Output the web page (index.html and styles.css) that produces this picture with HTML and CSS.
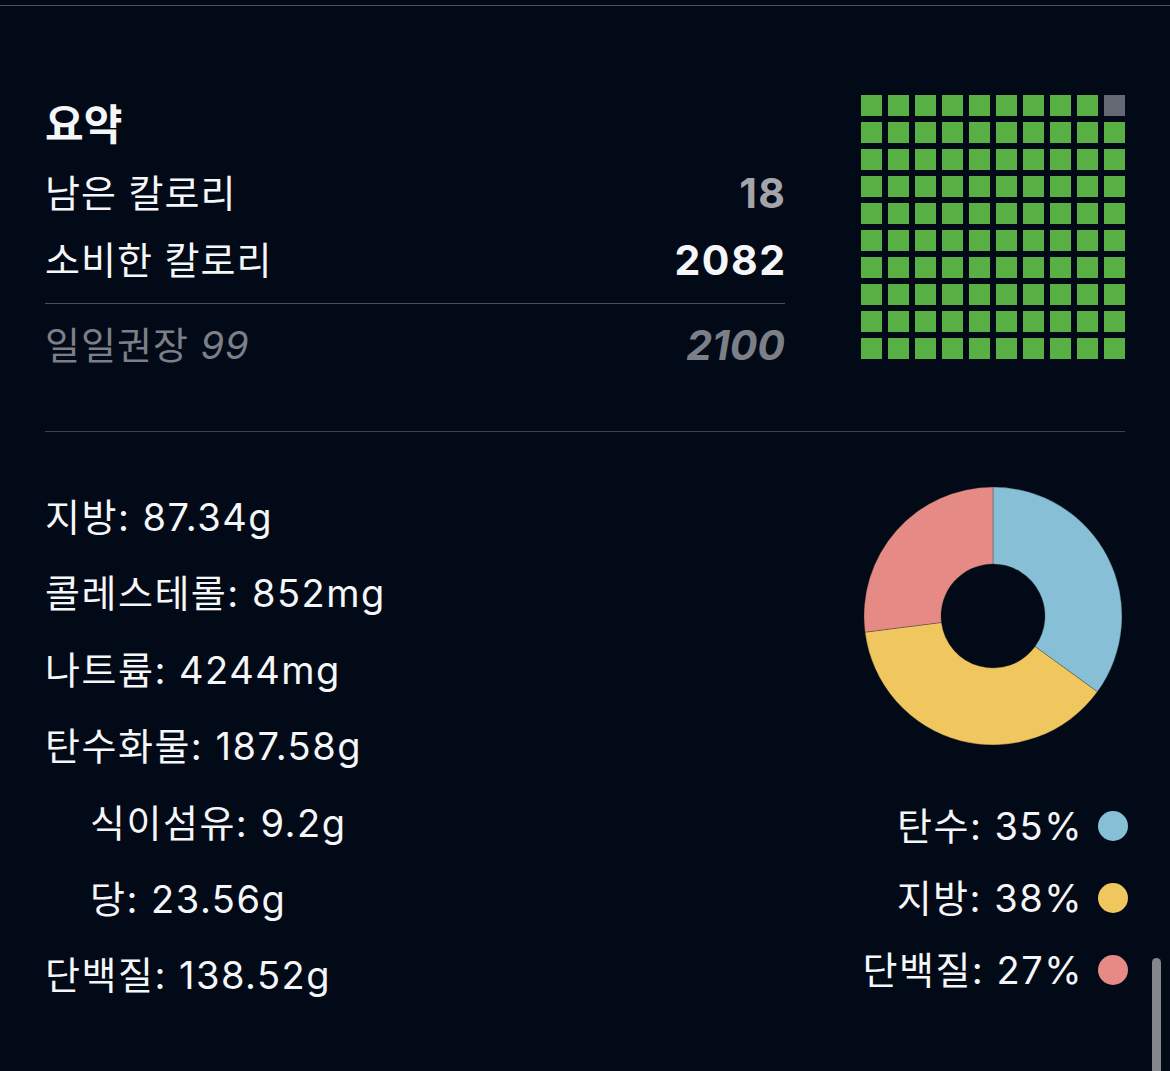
FILE: index.html
```html
<!DOCTYPE html>
<html lang="ko">
<head>
    <meta charset="UTF-8">
    <meta name="viewport" content="width=device-width, initial-scale=1.0">
    <title>요약</title>
    <link rel="stylesheet" href="styles.css">
</head>
<body>
    <div class="topbar"></div>
    <main class="content">
        <section class="summary">
            <div class="summary-text">
                <h2 class="title">요약</h2>
                <div class="row">
                    <span>남은 칼로리</span>
                    <span class="value remaining">18</span>
                </div>
                <div class="row row-consumed">
                    <span>소비한 칼로리</span>
                    <span class="value">2082</span>
                </div>
                <div class="row row-goal">
                    <span>일일권장 <em>99</em></span>
                    <span class="value goal">2100</span>
                </div>
            </div>
            <div class="waffle">
                <i></i><i></i><i></i><i></i><i></i><i></i><i></i><i></i><i></i><i class="empty"></i>
                <i></i><i></i><i></i><i></i><i></i><i></i><i></i><i></i><i></i><i></i>
                <i></i><i></i><i></i><i></i><i></i><i></i><i></i><i></i><i></i><i></i>
                <i></i><i></i><i></i><i></i><i></i><i></i><i></i><i></i><i></i><i></i>
                <i></i><i></i><i></i><i></i><i></i><i></i><i></i><i></i><i></i><i></i>
                <i></i><i></i><i></i><i></i><i></i><i></i><i></i><i></i><i></i><i></i>
                <i></i><i></i><i></i><i></i><i></i><i></i><i></i><i></i><i></i><i></i>
                <i></i><i></i><i></i><i></i><i></i><i></i><i></i><i></i><i></i><i></i>
                <i></i><i></i><i></i><i></i><i></i><i></i><i></i><i></i><i></i><i></i>
                <i></i><i></i><i></i><i></i><i></i><i></i><i></i><i></i><i></i><i></i>
            </div>
        </section>

        <section class="nutrients">
            <ul class="nutrient-list">
                <li>지방: 87.34g</li>
                <li>콜레스테롤: 852mg</li>
                <li>나트륨: 4244mg</li>
                <li>탄수화물: 187.58g</li>
                <li class="sub">식이섬유: 9.2g</li>
                <li class="sub">당: 23.56g</li>
                <li>단백질: 138.52g</li>
            </ul>
            <div class="macros">
                <svg class="donut" width="260" height="260" viewBox="0 0 260 260">
                    <path class="carb" d="M130 1 A129 129 0 0 1 234.36 205.82 L172.07 160.57 A52 52 0 0 0 130 78 Z"/>
                    <path class="fat" d="M234.36 205.82 A129 129 0 0 1 2.02 146.17 L78.41 136.52 A52 52 0 0 0 172.07 160.57 Z"/>
                    <path class="protein" d="M2.02 146.17 A129 129 0 0 1 130 1 L130 78 A52 52 0 0 0 78.41 136.52 Z"/>
                </svg>
                <ul class="legend">
                    <li>탄수: 35% <span class="dot carb-dot"></span></li>
                    <li>지방: 38% <span class="dot fat-dot"></span></li>
                    <li>단백질: 27% <span class="dot protein-dot"></span></li>
                </ul>
            </div>
        </section>
    </main>
    <div class="scroll-thumb"></div>
</body>
</html>
```

FILE: styles.css
```css
html, body {
    height: 100%;
}
body {
    margin: 0;
    background-color: #030a17;
    color: #f5f6f8;
    font-family: Inter, "Noto Sans CJK KR", sans-serif;
    overflow: hidden;
    position: relative;
}
.topbar {
    height: 5px;
    border-bottom: 1px solid #4b5160;
}
.content {
    padding: 0 45px;
}

/* summary block */
.summary {
    display: flex;
    justify-content: space-between;
    padding-top: 89px;
    padding-bottom: 52px;
    border-bottom: 1px solid #3d4250;
}
.summary-text {
    width: 740px;
}
.title {
    margin: 6px 0 11px;
    font-size: 42px;
    line-height: 48px;
    font-weight: 700;
}
.row {
    display: flex;
    justify-content: space-between;
    align-items: center;
    height: 67px;
    font-size: 38px;
    line-height: 67px;
    letter-spacing: 1px;
}
.row-consumed {
    padding-bottom: 9px;
    border-bottom: 1px solid #4b5160;
}
.row-goal {
    margin-top: 8px;
    color: #7c7f88;
}
.row-goal em {
    font-style: italic;
}
.value {
    font-weight: 700;
    font-size: 41px;
    letter-spacing: 1.5px;
    margin-right: -1.5px;
}
.remaining {
    color: #a3a5ab;
}
.goal {
    font-style: italic;
    letter-spacing: 0;
    margin-right: 0;
    color: #7c7f88;
}
.waffle {
    display: grid;
    grid-template-columns: repeat(10, 21px);
    grid-auto-rows: 21px;
    gap: 6px;
    align-self: flex-start;
}
.waffle i {
    background-color: #58b044;
}
.waffle i.empty {
    background-color: #646873;
}

/* nutrients block */
.nutrients {
    display: flex;
    justify-content: space-between;
}
.nutrient-list {
    list-style: none;
    margin: 0;
    padding: 47px 0 0;
    font-size: 38px;
    line-height: 76.4px;
    letter-spacing: 1.5px;
}
.nutrient-list .sub {
    padding-left: 45px;
}
.macros {
    width: 270px;
    margin-right: -3px;
    padding-top: 54px;
    display: flex;
    flex-direction: column;
    align-items: center;
}
.donut path {
    stroke: rgba(40, 40, 40, 0.5);
    stroke-width: 0.6;
}
.carb { fill: #87c0d6; }
.fat { fill: #f0c75f; }
.protein { fill: #e58a84; }
.legend {
    list-style: none;
    margin: 44px 0 0;
    padding: 0;
    align-self: stretch;
    font-size: 38px;
    line-height: 72px;
    letter-spacing: 1.5px;
}
.legend li {
    display: flex;
    align-items: center;
    justify-content: flex-end;
    gap: 15px;
}
.dot {
    width: 30px;
    height: 30px;
    border-radius: 50%;
}
.carb-dot { background-color: #87c0d6; }
.fat-dot { background-color: #f0c75f; }
.protein-dot { background-color: #e58a84; }

.scroll-thumb {
    position: absolute;
    left: 1152px;
    top: 958px;
    width: 9px;
    height: 130px;
    border-radius: 5px;
    background-color: #85878d;
}
```
